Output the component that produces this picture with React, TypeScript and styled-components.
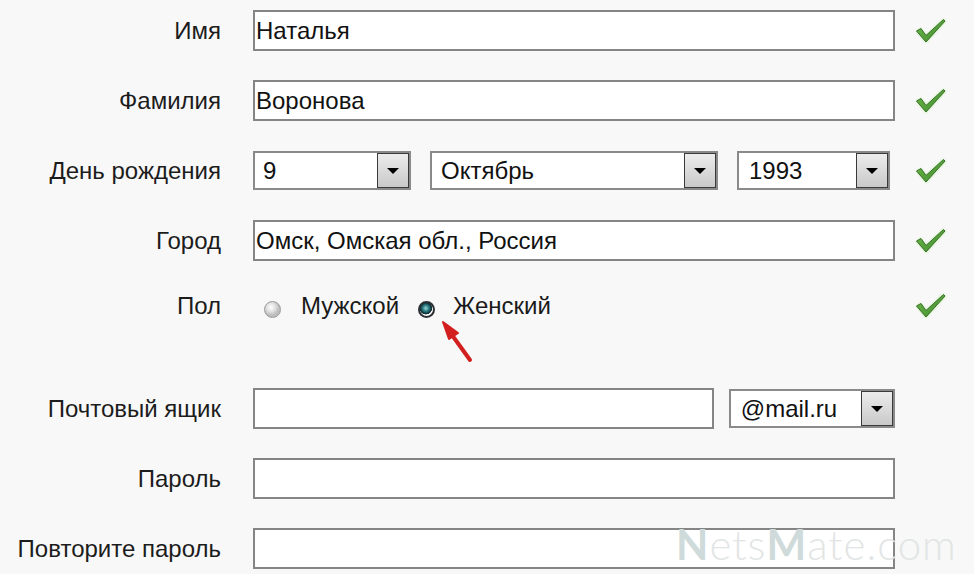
import React from "react";
import styled, { createGlobalStyle } from "styled-components";

const GlobalStyle = createGlobalStyle`
  html, body { margin: 0; padding: 0; background: #f8f8f8; }
  body { font-family: "Liberation Sans", Arial, sans-serif; color: #1a1a1a; }
`;

const Page = styled.div`
  position: relative;
  width: 974px;
  height: 574px;
  overflow: hidden;
  padding-top: 10px;
  box-sizing: border-box;
  background: #f8f8f8;
`;

const Row = styled.div<{ $h?: number; $mb?: number }>`
  display: grid;
  grid-template-columns: 253px 642px 1fr;
  align-items: center;
  height: ${(p) => p.$h ?? 41}px;
  margin-bottom: ${(p) => p.$mb ?? 29}px;
`;

const Label = styled.div`
  text-align: right;
  padding-right: 32px;
  font-size: 24px;
  color: #1c1c1c;
  white-space: nowrap;
`;

const Field = styled.div<{ $w?: number; $pl?: number }>`
  box-sizing: border-box;
  width: ${(p) => (p.$w ? `${p.$w}px` : "100%")};
  height: 41px;
  border: 2px solid #858585;
  background: #fff;
  font-size: 24px;
  line-height: 37px;
  padding-left: ${(p) => p.$pl ?? 1}px;
  color: #111;
  white-space: nowrap;
`;

const FieldGroup = styled.div<{ $gap: number }>`
  display: flex;
  gap: ${(p) => p.$gap}px;
  align-items: center;
`;

const SelectBox = styled.div<{ $w: number }>`
  box-sizing: border-box;
  width: ${(p) => p.$w}px;
  height: 39px;
  border: 2px solid #8a8a8a;
  background: #fff;
  display: flex;
  align-items: stretch;
  font-size: 24px;
  color: #111;
`;

const SelectText = styled.div<{ $pl: number }>`
  flex: 1;
  padding-left: ${(p) => p.$pl}px;
  line-height: 35px;
  white-space: nowrap;
`;

const DropButton = styled.div`
  box-sizing: border-box;
  width: 32px;
  border: 1px solid #3a3a3a;
  background: linear-gradient(#ececec, #c9c9c9);
  display: flex;
  align-items: center;
  justify-content: center;
`;

const Arrow = styled.div`
  width: 0;
  height: 0;
  border-left: 6px solid transparent;
  border-right: 6px solid transparent;
  border-top: 6px solid #000;
`;

const CheckCell = styled.div`
  padding-left: 19px;
  display: flex;
  align-items: center;
`;

const RadioGroup = styled.div`
  display: flex;
  align-items: center;
  padding-left: 11px;
  font-size: 24px;
  color: #1a1a1a;
`;

const Radio = styled.span<{ $checked?: boolean }>`
  box-sizing: border-box;
  width: 17px;
  height: 17px;
  border-radius: 50%;
  margin-right: ${(p) => (p.$checked ? 18 : 20)}px;
  margin-top: 6px;
  border: ${(p) => (p.$checked ? "2px solid #2a2f33" : "1px solid #9a9a9a")};
  background: ${(p) =>
    p.$checked
      ? "radial-gradient(circle at 45% 40%, #9fd6d8 0, #2e7f86 3px, #0f3f46 5px, #1a2a2e 6px, #ffffff 6.5px)"
      : "radial-gradient(circle at 40% 35%, #ffffff 0, #e4e4e4 4px, #bdbdbd 8px)"};
`;

const RadioLabel = styled.span`
  margin-right: 19px;
`;

const RedArrow = styled.svg`
  position: absolute;
  left: 436px;
  top: 316px;
`;

const Watermark = styled.div`
  position: absolute;
  left: 676px;
  top: 519px;
  font-family: Lato, "DejaVu Sans", sans-serif;
  font-weight: 300;
  font-size: 42px;
  letter-spacing: 1px;
  color: #e2e5e5;
`;

const WmStrong = styled.span`
  color: #cfdada;
  font-weight: 700;
`;

function Check() {
  return (
    <svg width="34" height="30" viewBox="0 0 34 30">
      <defs>
        <linearGradient id="cg" x1="0" y1="0" x2="1" y2="1">
          <stop offset="0" stopColor="#6dbb4a" />
          <stop offset="1" stopColor="#3f8a2c" />
        </linearGradient>
        <filter id="gl" x="-30%" y="-30%" width="160%" height="160%">
          <feGaussianBlur stdDeviation="1.2" />
        </filter>
      </defs>
      <path
        d="M2 15 L7 12 L12 19 L29 3 L32 5 L12 27 Z"
        fill="#8fe36a"
        opacity="0.55"
        filter="url(#gl)"
      />
      <path
        d="M2.5 15 L7 12.5 L12 19.5 L29.5 3.5 L31 5 L12 26 Z"
        fill="url(#cg)"
        stroke="#3c6e2e"
        strokeWidth="1"
        strokeLinejoin="round"
      />
    </svg>
  );
}

function Select({ w, pl, value }: { w: number; pl: number; value: string }) {
  return (
    <SelectBox $w={w}>
      <SelectText $pl={pl}>{value}</SelectText>
      <DropButton>
        <Arrow />
      </DropButton>
    </SelectBox>
  );
}

export default function App() {
  return (
    <Page>
      <GlobalStyle />
      <Row>
        <Label>Имя</Label>
        <Field>Наталья</Field>
        <CheckCell>
          <Check />
        </CheckCell>
      </Row>
      <Row>
        <Label>Фамилия</Label>
        <Field>Воронова</Field>
        <CheckCell>
          <Check />
        </CheckCell>
      </Row>
      <Row>
        <Label>День рождения</Label>
        <FieldGroup $gap={19}>
          <Select w={158} pl={8} value="9" />
          <Select w={288} pl={9} value="Октябрь" />
          <Select w={153} pl={10} value="1993" />
        </FieldGroup>
        <CheckCell>
          <Check />
        </CheckCell>
      </Row>
      <Row>
        <Label>Город</Label>
        <Field>Омск, Омская обл., Россия</Field>
        <CheckCell>
          <Check />
        </CheckCell>
      </Row>
      <Row $h={32} $mb={66}>
        <Label>Пол</Label>
        <RadioGroup>
          <Radio />
          <RadioLabel>Мужской</RadioLabel>
          <Radio $checked />
          <RadioLabel>Женский</RadioLabel>
        </RadioGroup>
        <CheckCell>
          <Check />
        </CheckCell>
      </Row>
      <Row>
        <Label>Почтовый ящик</Label>
        <FieldGroup $gap={15}>
          <Field $w={463} />
          <Select w={167} pl={10} value="@mail.ru" />
        </FieldGroup>
      </Row>
      <Row>
        <Label>Пароль</Label>
        <Field />
      </Row>
      <Row>
        <Label>Повторите пароль</Label>
        <Field />
      </Row>
      <RedArrow width="40" height="48" viewBox="0 0 40 48">
        <path d="M34 44 L16 19" stroke="#d21f1f" strokeWidth="4" strokeLinecap="round" />
        <path d="M7 6 L22 17 L13 23 Z" fill="#d21f1f" stroke="#d21f1f" strokeWidth="2" strokeLinejoin="round" />
      </RedArrow>
      <Watermark>
        <WmStrong>N</WmStrong>ets<WmStrong>M</WmStrong>ate.com
      </Watermark>
    </Page>
  );
}
